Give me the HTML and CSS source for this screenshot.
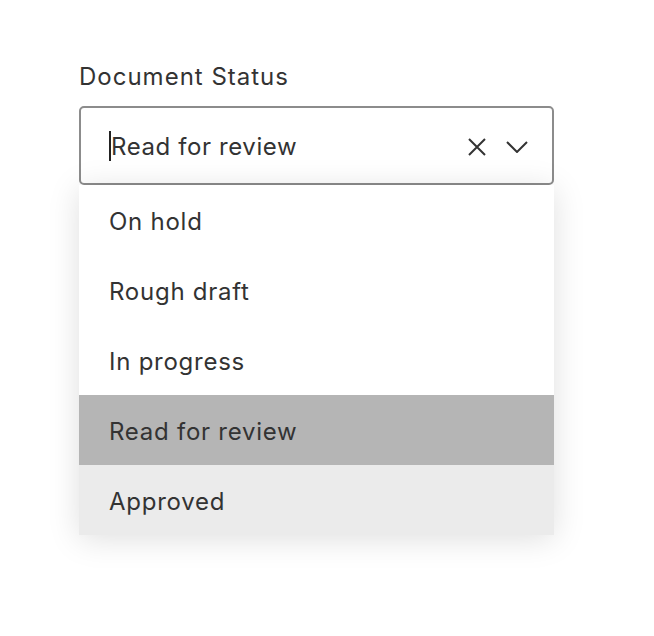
FILE: index.html
```html
<!DOCTYPE html>
<html lang="en">
<head>
  <meta charset="UTF-8" />
  <meta name="viewport" content="width=device-width, initial-scale=1.0" />
  <title>Document Status</title>
  <link rel="stylesheet" href="styles.css">
</head>
<body>
  <div class="field">
    <label class="field-label" for="status">Document Status</label>
    <div class="combo">
      <div class="combo-input">
        <span class="caret"></span>
        <span class="combo-value" id="status">Read for review</span>
        <span class="combo-icons">
          <svg class="icon-clear" width="18" height="18" viewBox="0 0 18 18">
            <path d="M1 1 L17 17 M17 1 L1 17" />
          </svg>
          <svg class="icon-chevron" width="22" height="12" viewBox="0 0 22 12">
            <path d="M1 1 L11 11 L21 1" />
          </svg>
        </span>
      </div>
      <ul class="combo-menu">
        <li class="option">On hold</li>
        <li class="option">Rough draft</li>
        <li class="option">In progress</li>
        <li class="option selected">Read for review</li>
        <li class="option hovered">Approved</li>
      </ul>
    </div>
  </div>
</body>
</html>
```

FILE: styles.css
```css
html, body {
  height: 100%;
}
body {
  font-family: Inter, "Noto Sans", Arial, sans-serif;
  background: #fff;
  color: #333;
  margin: 0;
  padding: 60px 79px;
  box-sizing: border-box;
}
.field {
  width: 475px;
}
.field-label {
  display: block;
  font-size: 24px;
  letter-spacing: 1px;
  line-height: 34px;
  margin-bottom: 12px;
}
.combo {
  position: relative;
}
.combo-input {
  position: relative;
  display: flex;
  align-items: center;
  height: 79px;
  box-sizing: border-box;
  border: 2px solid #8c8c8c;
  border-radius: 5px;
  padding: 2px 24px 0 28px;
  background: #fff;
  font-size: 24px;
  letter-spacing: 0.6px;
}
.caret {
  width: 2px;
  height: 30px;
  background: #222;
  margin-top: -2px;
}
.combo-value {
  flex: 1;
}
.combo-icons {
  display: flex;
  align-items: center;
  gap: 20px;
}
.combo-icons svg path {
  fill: none;
  stroke: #333;
  stroke-width: 2;
}
.combo-menu {
  position: relative;
  z-index: 1;
  margin: 0;
  padding: 0;
  list-style: none;
  background: #fff;
  box-shadow: 0 4px 30px rgba(0,0,0,0.13);
}
.option {
  height: 66px;
  line-height: 66px;
  padding: 4px 0 0 30px;
  font-size: 24px;
  letter-spacing: 0.75px;
}
.option.selected { background: #b5b5b5; }
.option.hovered { background: #ebebeb; }
```
